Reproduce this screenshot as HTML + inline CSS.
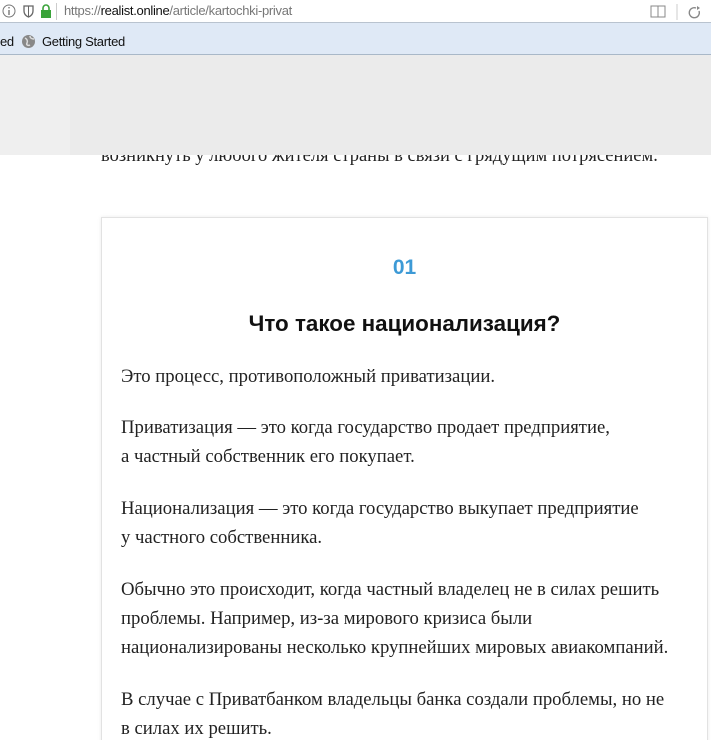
<!DOCTYPE html>
<html style="width:711px;height:740px;overflow:hidden"><head><meta charset="utf-8"><style>
*{margin:0;padding:0;box-sizing:border-box}
body{width:711px;height:740px;overflow:hidden;background:#fff;position:relative;font-family:"Liberation Serif",serif}
.addr{position:absolute;left:0;top:0;width:711px;height:23px;background:#fff;border-bottom:1px solid #b9c3cf}
.url{position:absolute;left:64px;top:3px;font:13px "Liberation Sans",sans-serif;color:#777;letter-spacing:-0.3px}
.url b{font-weight:normal;color:#111}
.bm{position:absolute;left:0;top:23px;width:711px;height:32px;background:#dfe9f6;border-bottom:1px solid #a9b8c8;font:13px "Liberation Sans",sans-serif;color:#111;letter-spacing:-0.3px}
.gray{position:absolute;left:0;top:55px;width:711px;height:100px;background:#ebebeb}
.gl{position:absolute;left:0;top:55px;width:70px;height:100px;background:#efefef}
.intro{position:absolute;left:101px;top:146px;font-size:18.5px;color:#222;white-space:nowrap}
.card{position:absolute;left:101px;top:217px;width:607px;height:530px;background:#fff;border:1px solid #e2e2e2;box-shadow:0 0 4px rgba(0,0,0,.08)}
.num{position:absolute;top:256px;text-align:center;font:bold 21px "Liberation Sans",sans-serif;color:#3d9ad6}
.h{position:absolute;left:101px;width:607px;top:311px;text-align:center;font:bold 22.4px "Liberation Sans",sans-serif;color:#111}
.p{position:absolute;left:121px;font-size:18.7px;line-height:29px;color:#222;white-space:nowrap}
</style></head><body>
<div class="addr">
<svg style="position:absolute;left:2px;top:4px" width="52" height="15"><circle cx="7" cy="7" r="6" fill="none" stroke="#777"/><rect x="6.3" y="6" width="1.4" height="5" fill="#777"/><rect x="6.3" y="3" width="1.4" height="1.4" fill="#777"/><path d="M22 2h9v5c0 3-2 5-4.5 6C24 12 22 10 22 7z" fill="none" stroke="#666" stroke-width="1.3"/><path d="M26.5 2v11" stroke="#666"/><rect x="39" y="6" width="10" height="8" fill="#3aa33a"/><path d="M41 6V4a3 3 0 0 1 6 0v2" fill="none" stroke="#3aa33a" stroke-width="1.6"/></svg>
<div style="position:absolute;left:56px;top:3px;width:1px;height:17px;background:#ccc"></div>
<div class="url">https://<b>realist.online</b>/article/kartochki-privat</div>
<svg style="position:absolute;left:650px;top:4px" width="60" height="16"><rect x="1" y="2" width="14" height="11" fill="none" stroke="#888"/><path d="M8 2v11" stroke="#888"/><path d="M27 0v16" stroke="#ccc"/><path d="M46 4a5 5 0 1 0 3 3" fill="none" stroke="#888" stroke-width="1.4"/><path d="M47 2l3 2-3 2z" fill="#888"/></svg>
</div>
<div class="bm"><span style="position:absolute;left:0;top:11px">ed</span>
<svg style="position:absolute;left:21px;top:11px" width="15" height="15"><circle cx="7.5" cy="7.5" r="6.5" fill="#888"/><path d="M4 4c2 1 3 3 2 5s1 3 3 2M9 2c0 2 2 3 4 3" stroke="#ddd" fill="none" stroke-width="1.5"/></svg>
<span style="position:absolute;left:42px;top:11px">Getting Started</span></div>
<div class="intro">возникнуть у любого жителя страны в связи с грядущим потрясением.</div>
<div class="gray"></div><div class="gl"></div>
<div class="card"></div>
<div class="num" style="left:101px;width:607px">01</div>
<div class="h">Что такое национализация?</div>
<div class="p" style="top:362px">Это процесс, противоположный приватизации.</div>
<div class="p" style="top:413px">Приватизация — это когда государство продает предприятие,<br>а частный собственник его покупает.</div>
<div class="p" style="top:494px">Национализация — это когда государство выкупает предприятие<br>у частного собственника.</div>
<div class="p" style="top:575px">Обычно это происходит, когда частный владелец не в силах решить<br>проблемы. Например, из-за мирового кризиса были<br>национализированы несколько крупнейших мировых авиакомпаний.</div>
<div class="p" style="top:685px">В случае с Приватбанком владельцы банка создали проблемы, но не<br>в силах их решить.</div>
</body></html>
